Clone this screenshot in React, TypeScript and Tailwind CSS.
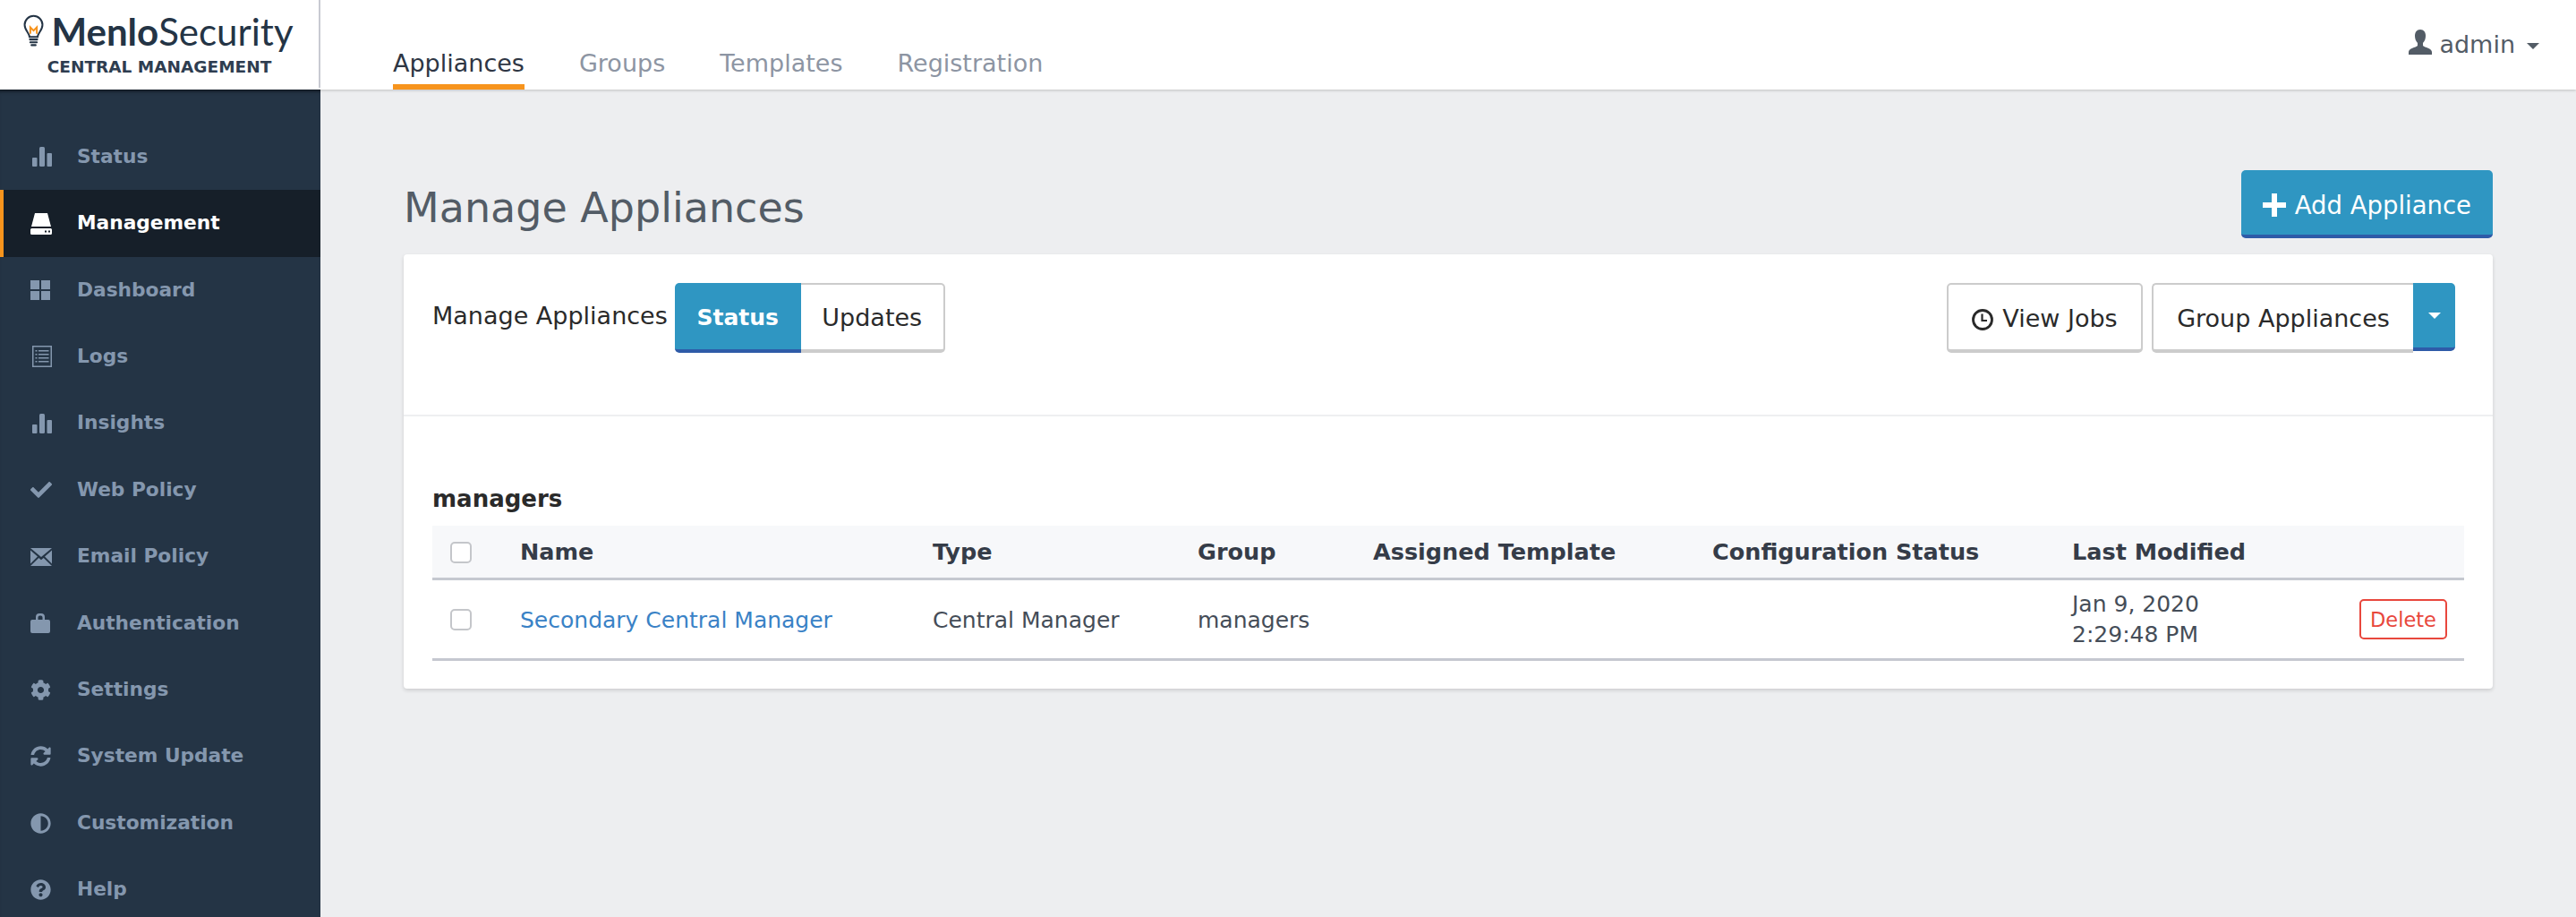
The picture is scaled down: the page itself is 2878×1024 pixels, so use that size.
import { FaCheck, FaCog, FaAdjust, FaQuestionCircle, FaSyncAlt } from 'react-icons/fa';
import type { ReactNode } from 'react';

const FONT = "font-['DejaVu_Sans',sans-serif]";

const Bars = () => (
  <svg viewBox="0 0 22 22" className="ml-[2px] h-[22px] w-[22px]" fill="currentColor">
    <rect x="0" y="12" width="5.500" height="10" rx="1" />
    <rect x="8" y="0" width="6" height="22" rx="1.500" />
    <rect x="16.500" y="7" width="5.500" height="15" rx="1" />
  </svg>
);

const Drive = () => (
  <svg viewBox="0 0 24 24" className="h-[24px] w-[24px]" fill="currentColor">
    <path d="M5 0h14l4 15H1z" />
    <path fillRule="evenodd" d="M1.500 17h21a1.500 1.500 0 0 1 1.500 1.500v4a1.500 1.500 0 0 1-1.500 1.500h-21A1.500 1.500 0 0 1 0 22.500v-4A1.500 1.500 0 0 1 1.500 17zM16 19.500v2h2v-2zM20 19.500v2h2v-2z" />
  </svg>
);

const Tiles = () => (
  <svg viewBox="0 0 22 22" className="h-[22px] w-[22px]" fill="currentColor">
    <rect width="10" height="10" />
    <rect x="12" width="10" height="10" />
    <rect y="12" width="10" height="10" />
    <rect x="12" y="12" width="10" height="10" />
  </svg>
);

const ListBox = () => (
  <svg viewBox="0 0 22 24" className="ml-[2px] h-[24px] w-[22px]" fill="currentColor">
    <path fillRule="evenodd" d="M0 0h22v24H0zM1.500 1.500v21h19v-21z" />
    <path d="M3.500 5h2v1.500h-2zM7 5h11.500v1.500H7zM3.500 9h2v1.500h-2zM7 9h11.500v1.500H7zM3.500 13h2v1.500h-2zM7 13h11.500v1.500H7zM3.500 17h2v1.500h-2zM7 17h11.500v1.500H7z" />
  </svg>
);

const Mail = () => (
  <svg viewBox="0 0 24 20" className="h-[20px] w-[24px]" fill="currentColor">
    <path d="M0 0h24L12 10z" />
    <path d="M0 2.500l8 7-8 8zM24 2.500l-8 7 8 8zM0 20l9.300-9 2.700 2.300L14.700 11 24 20z" />
  </svg>
);

const Lock = () => (
  <svg viewBox="0 0 22 23" className="h-[23px] w-[22px]" fill="currentColor">
    <path fillRule="evenodd" d="M6 8V5a4 4 0 0 1 4-4h2a4 4 0 0 1 4 4v3h4a2 2 0 0 1 2 2v11a2 2 0 0 1-2 2H2a2 2 0 0 1-2-2V10a2 2 0 0 1 2-2zM8.500 8h5V5.500a2 2 0 0 0-2-2h-1a2 2 0 0 0-2 2z" />
  </svg>
);

const Person = ({ className }: { className?: string }) => (
  <svg viewBox="0 0 26 28" className={className} fill="currentColor">
    <path d="M13 0c4 0 6 3 6 7 0 3-1 6-3 8v3c2 2 10 3 10 7v3H0v-3c0-4 8-5 10-7v-3C8 13 7 10 7 7c0-4 2-7 6-7z" />
  </svg>
);

const Bulb = () => (
  <svg viewBox="0 0 26 42" className="h-[38px] w-[25px]">
    <path d="M8 28c0-5-6-8-6-15a11 11 0 0 1 22 0c0 7-6 10-6 15z" fill="none" stroke="#243445" strokeWidth="2.200" />
    <path d="M8.500 31h9M9 34.500h8M10.500 38h5" stroke="#243445" strokeWidth="2.400" strokeLinecap="round" />
    <path d="M9 24v-8l4 4 4-4v8" fill="none" stroke="#f7941d" strokeWidth="2.200" />
  </svg>
);

const Caret = ({ className }: { className?: string }) => (
  <span className={`inline-block h-0 w-0 border-x-[7px] border-t-[7px] border-x-transparent ${className ?? ''}`} />
);

const menu: { label: string; icon: ReactNode; active?: boolean }[] = [
  { label: 'Status', icon: <Bars /> },
  { label: 'Management', icon: <Drive />, active: true },
  { label: 'Dashboard', icon: <Tiles /> },
  { label: 'Logs', icon: <ListBox /> },
  { label: 'Insights', icon: <Bars /> },
  { label: 'Web Policy', icon: <FaCheck size={24} /> },
  { label: 'Email Policy', icon: <Mail /> },
  { label: 'Authentication', icon: <Lock /> },
  { label: 'Settings', icon: <FaCog size={23} /> },
  { label: 'System Update', icon: <FaSyncAlt size={23} /> },
  { label: 'Customization', icon: <FaAdjust size={23} /> },
  { label: 'Help', icon: <FaQuestionCircle size={23} /> },
];

const Checkbox = () => (
  <span className="block h-[24px] w-[24px] rounded-[5px] border-2 border-[#c4c6ca] bg-white" />
);

const columns = 'grid grid-cols-[98px_461px_296px_196px_379px_402px_1fr_117px]';

export default function App() {
  return (
    <div className={`${FONT} flex h-[1024px] w-[2878px] flex-col overflow-hidden bg-[#edeef0]`}>
      <header className="z-10 flex h-[100px] shrink-0 bg-white shadow-[0_1px_3px_rgba(0,0,0,0.2)]">
        <div className="flex h-[98px] w-[358px] shrink-0 flex-col items-center border-r-2 border-[#c8cad2] pt-[14px]">
          <div className="flex items-center gap-[7px] pr-[3px] leading-none">
            <Bulb />
            <span className="font-['Lato',sans-serif] text-[42px] leading-[42px] text-[#243445]">
              <span className="font-bold">Menlo</span>Security
            </span>
          </div>
          <span className="mt-[7px] text-[18.500px] leading-[24px] font-bold text-[#2e3d50]">CENTRAL MANAGEMENT</span>
        </div>
        <nav className="flex items-end gap-[61px] pl-[81px] text-[27px] text-[#8d95a3]">
          <a className="border-b-[6px] border-[#f7941d] pb-[3px] leading-[40px] text-[#2e3644]">Appliances</a>
          <a className="pb-[9px] leading-[40px]">Groups</a>
          <a className="pb-[9px] leading-[40px]">Templates</a>
          <a className="pb-[9px] leading-[40px]">Registration</a>
        </nav>
        <div className="ml-auto flex items-start gap-[8px] pt-[32px] pr-[41px] text-[27px] leading-[36px] text-[#535c66]">
          <Person className="mt-[1px] h-[28px] w-[26px]" />
          <span>admin</span>
          <Caret className="mt-[16px] ml-[5px] border-t-[#535c66]" />
        </div>
      </header>

      <div className="flex min-h-0 flex-1">
        <aside className="w-[358px] shrink-0 bg-[#243445] pt-[38px] text-[#8497ae] shadow-[inset_0_5px_4px_-3px_rgba(0,0,0,0.45)]">
          {menu.map((item) => (
            <div
              key={item.label}
              className={`flex h-[74.400px] items-center text-[21.700px] font-bold ${
                item.active ? 'border-l-[4px] border-[#f7941d] bg-[#161f29] pl-[30px] text-white' : 'pl-[34px]'
              }`}
            >
              <span className="flex w-[52px] shrink-0 items-center">{item.icon}</span>
              <span>{item.label}</span>
            </div>
          ))}
        </aside>

        <main className="min-w-0 flex-1 pt-[90px] pr-[93px] pl-[93px]">
          <div className="flex items-start justify-between">
            <h1 className="pt-[12px] pb-[2px] text-[46px] leading-[60px] text-[#535c66]">Manage Appliances</h1>
            <button className="flex h-[76px] items-center gap-[10px] rounded-[5px] border-b-[4px] border-[#2e5ba8] bg-[#2f96c2] px-[24px] pt-[6px] text-[27.500px] text-white">
              <svg viewBox="0 0 26 26" className="h-[26px] w-[26px]" fill="currentColor">
                <path d="M10 0h6v10h10v6H16v10h-6V16H0v-6h10z" />
              </svg>
              <span className="pt-[1px]">Add Appliance</span>
            </button>
          </div>

          <section className="mt-[18px] h-[485px] rounded-[4px] bg-white shadow-[0_2px_4px_rgba(0,0,0,0.14)]">
            <div className="flex h-[181px] items-start justify-between border-b-2 border-[#eeeff1] pt-[32px] pr-[42px] pl-[32px]">
              <div className="flex items-start gap-[8px] text-[27px] text-[#2a2a2a]">
                <span className="pt-[19px] leading-[36px]">Manage Appliances</span>
                <div className="flex h-[78px]">
                  <span className="flex w-[141px] items-center justify-center rounded-l-[5px] border-b-[4px] border-[#2e5ba8] bg-[#2f96c2] pt-[3px] text-[25px] font-bold text-white">Status</span>
                  <span className="flex w-[161px] items-center justify-center rounded-r-[5px] border-2 border-b-[4px] border-l-0 border-[#cccccc] pt-[3px]">Updates</span>
                </div>
              </div>
              <div className="flex items-start gap-[10px] text-[27px] text-[#2a2a2a]">
                <span className="flex h-[78px] w-[219px] items-center justify-center gap-[10px] rounded-[5px] border-2 border-b-[4px] border-[#cccccc] pt-[5px]">
                  <svg viewBox="0 0 24 24" className="h-[24px] w-[24px]" fill="none" stroke="currentColor" strokeWidth="2.800">
                    <circle cx="12" cy="12" r="10.500" />
                    <path d="M11.500 5.500V13H17" strokeWidth="2.200" />
                  </svg>
                  View Jobs
                </span>
                <div className="flex h-[78px]">
                  <span className="flex w-[292px] items-center justify-center rounded-l-[5px] border-2 border-r-0 border-b-[4px] border-[#cccccc] pt-[5px]">Group Appliances</span>
                  <span className="flex h-[76px] w-[47px] items-center justify-center rounded-r-[5px] border-b-[4px] border-[#2e5ba8] bg-[#2f96c2]">
                    <Caret className="border-t-white" />
                  </span>
                </div>
              </div>
            </div>

            <div className="px-[32px] pt-[74px] text-[25px]">
              <h2 className="text-[26px] leading-[36px] font-bold text-[#2a2a2a]">managers</h2>
              <div className={`${columns} mt-[12px] h-[61px] items-center border-b-[3px] border-[#c5c8d0] bg-[#f7f8fa] pt-[1px] text-[25.500px] font-bold text-[#353c48]`}>
                <span className="pl-[20px]"><Checkbox /></span>
                <span>Name</span>
                <span>Type</span>
                <span>Group</span>
                <span>Assigned Template</span>
                <span>Configuration Status</span>
                <span>Last Modified</span>
              </div>
              <div className={`${columns} h-[90px] items-center border-b-[3px] border-[#c5c8d0] text-[#454d58]`}>
                <span className="pl-[20px]"><Checkbox /></span>
                <a className="pt-[2px] text-[#3a82c6]">Secondary Central Manager</a>
                <span className="pt-[2px]">Central Manager</span>
                <span className="pt-[2px]">managers</span>
                <span />
                <span />
                <span className="leading-[34px]">Jan 9, 2020<br />2:29:48 PM</span>
                <span className="mr-[19px] flex h-[45px] w-[98px] items-center justify-center justify-self-end rounded-[5px] border-2 border-[#e8473d] pt-[3px] text-[22.500px] text-[#e8473d]">Delete</span>
              </div>
            </div>
          </section>
        </main>
      </div>
    </div>
  );
}
